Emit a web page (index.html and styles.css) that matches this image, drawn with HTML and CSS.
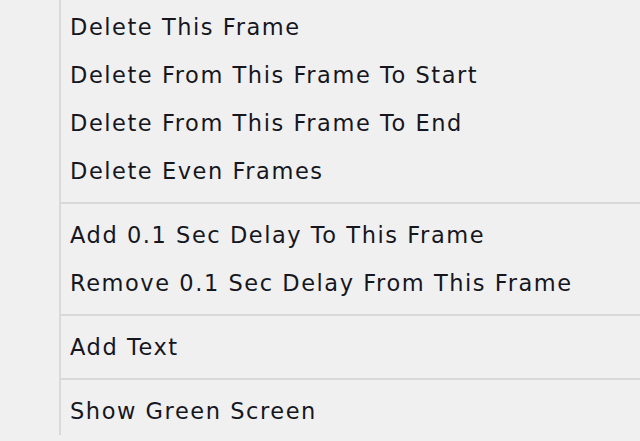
FILE: index.html
```html
<!DOCTYPE html>
<html lang="en">
<head>
    <meta charset="UTF-8">
    <meta name="viewport" content="width=device-width, initial-scale=1.0">
    <title>Frame Menu</title>
    <link rel="stylesheet" href="styles.css">
</head>
<body>
    <div class="menu">
        <div class="menu-item">Delete This Frame</div>
        <div class="menu-item">Delete From This Frame To Start</div>
        <div class="menu-item">Delete From This Frame To End</div>
        <div class="menu-item">Delete Even Frames</div>
        <div class="separator"></div>
        <div class="menu-item">Add 0.1 Sec Delay To This Frame</div>
        <div class="menu-item">Remove 0.1 Sec Delay From This Frame</div>
        <div class="separator"></div>
        <div class="menu-item">Add Text</div>
        <div class="separator"></div>
        <div class="menu-item">Show Green Screen</div>
    </div>
</body>
</html>
```

FILE: styles.css
```css
/* Page background */
body {
    margin: 0;
    background-color: #f0f0f0;
    font-family: "DejaVu Sans", Verdana, sans-serif;
    height: 441px;
    overflow: hidden;
}

/* Menu with the icon gutter on the left */
.menu {
    margin-left: 59px;
    padding-top: 3px;
    border-left: 2px solid #dadada;
    height: 432px;
}

.menu-item {
    height: 48px;
    line-height: 48px;
    padding-left: 9px;
    font-size: 22.5px;
    letter-spacing: 1.55px;
    color: #16161f;
    white-space: nowrap;
}

.separator {
    height: 2px;
    margin: 7px 0 7px;
    background-color: #d8d8d8;
}
```
